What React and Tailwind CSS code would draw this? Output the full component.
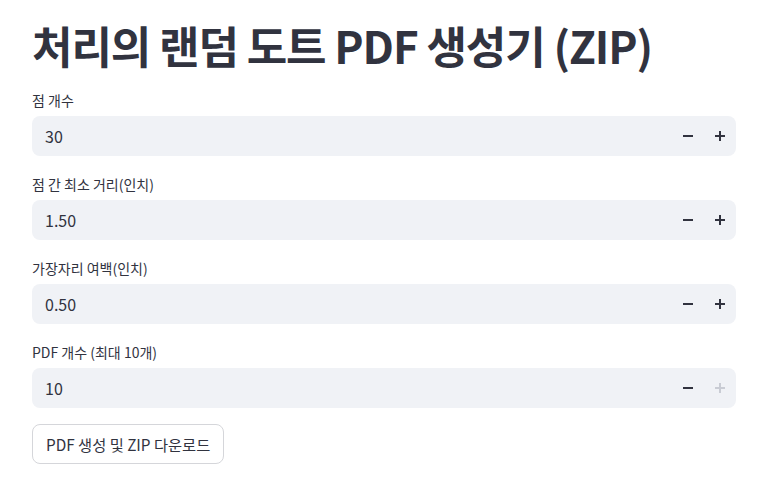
import React, { useState } from "react";

const font = { fontFamily: '"Noto Sans CJK KR", "Noto Sans", sans-serif' };

const fields = [
  { label: "점 개수", value: "30", plusDisabled: false },
  { label: "점 간 최소 거리(인치)", value: "1.50", plusDisabled: false },
  { label: "가장자리 여백(인치)", value: "0.50", plusDisabled: false },
  { label: "PDF 개수 (최대 10개)", value: "10", plusDisabled: true },
];

const MinusIcon = () => (
  <svg width="10" height="10" viewBox="0 0 10 10">
    <rect x="0" y="4" width="10" height="2" fill="currentColor" />
  </svg>
);

const PlusIcon = () => (
  <svg width="10" height="10" viewBox="0 0 10 10">
    <rect x="0" y="4" width="10" height="2" fill="currentColor" />
    <rect x="4" y="0" width="2" height="10" fill="currentColor" />
  </svg>
);

const NumberField = ({ label, value, plusDisabled }) => (
  <div className="flex flex-col">
    <label className="flex items-center h-6 mb-1 text-sm text-[#31333f]">{label}</label>
    <div className="flex items-center h-10 rounded-lg bg-[#f0f2f6]">
      <input
        readOnly
        value={value}
        className="flex-1 min-w-0 bg-transparent pl-[13px] text-base text-[#31333f] outline-none"
        style={font}
      />
      <button className="w-8 h-10 flex items-center justify-center text-[#31333f]">
        <MinusIcon />
      </button>
      <button
        className={`w-8 h-10 flex items-center justify-center rounded-r-lg ${
          plusDisabled ? "text-[#c9ccd4]" : "text-[#31333f]"
        }`}
      >
        <PlusIcon />
      </button>
    </div>
  </div>
);

export default function App() {
  const [items] = useState(fields);

  return (
    <div className="min-h-screen bg-white pl-8 pr-10 pt-[19px]" style={font}>
      <h1 className="text-[44px] leading-[53px] font-bold text-[#31333f] tracking-[-1.1px]">
        처리의 랜덤 도트 PDF 생성기 (ZIP)
      </h1>
      <div className="mt-4 flex flex-col gap-4">
        {items.map((f) => (
          <NumberField key={f.label} {...f} />
        ))}
        <div>
          <button className="h-10 px-[13px] rounded-lg border border-[#d5d6da] bg-white text-[15.3px] text-[#31333f]">
            PDF 생성 및 ZIP 다운로드
          </button>
        </div>
      </div>
    </div>
  );
}
